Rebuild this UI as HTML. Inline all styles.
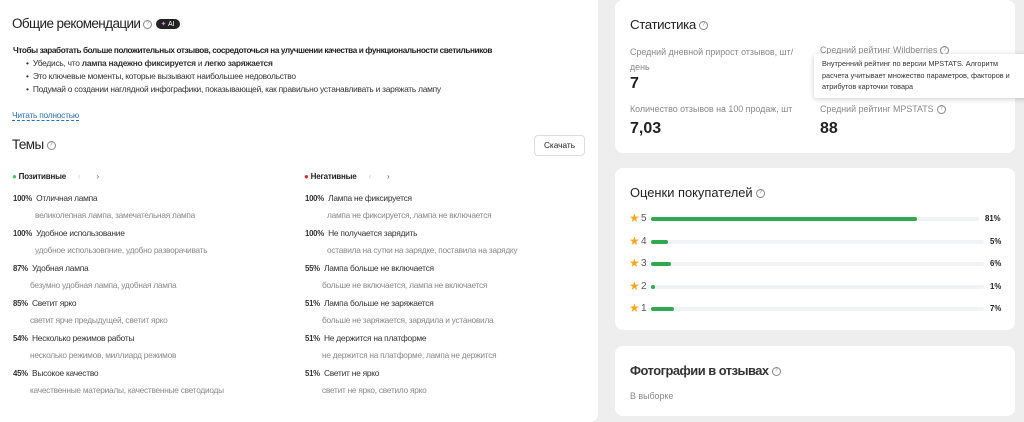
<!DOCTYPE html>
<html><head><meta charset="utf-8"><style>
*{box-sizing:border-box;margin:0;padding:0}
body{width:1024px;height:400px;overflow:hidden;background:#eeeeee;font-family:"Liberation Sans",sans-serif;color:#222;position:relative}
.card{position:absolute;background:#fff;border-radius:8px}
.a{position:absolute;white-space:nowrap}
.q{display:inline-block;width:9px;height:9px;border:1px solid #888;border-radius:50%;font-size:6px;line-height:7px;text-align:center;color:#888;vertical-align:middle;margin-left:3px;font-weight:normal;letter-spacing:0}
.s{font-size:8.4px;letter-spacing:-0.25px;color:#333}
.g{font-size:8.3px;letter-spacing:-0.25px;color:#888}
.pct{font-weight:bold;font-size:7.8px}
.track{position:absolute;height:4px;border-radius:2px;background:#f1f2f4}
.bar{position:absolute;height:4px;border-radius:2px;background:#2fa84f}
.star{position:absolute;color:#f5a623;font-size:12px}
</style></head><body>
<div class="card" style="left:-8px;top:-8px;width:606px;height:430px"></div>
<div class="card" style="left:615px;top:0;width:400px;height:153px"></div>
<div class="card" style="left:615px;top:168px;width:400px;height:162px"></div>
<div class="card" style="left:615px;top:346px;width:400px;height:70px"></div>

<div class="a" style="left:12px;top:16px;font-size:13.5px;letter-spacing:-0.6px">Общие рекомендации<span class="q">?</span> <span style="display:inline-block;background:#222;color:#fff;border-radius:7px;font-size:7px;padding:1px 5px;vertical-align:middle;letter-spacing:0"><span style="color:#c58cf5">✦</span> AI</span></div>
<div class="a" style="left:13px;top:46px;font-size:8.2px;letter-spacing:-0.4px;font-weight:bold">Чтобы заработать больше положительных отзывов, сосредоточься на улучшении качества и функциональности светильников</div>
<div class="a s" style="left:26px;top:58px">•&nbsp; Убедись, что <b>лампа надежно фиксируется</b> и <b>легко заряжается</b></div>
<div class="a s" style="left:26px;top:71px">•&nbsp; Это ключевые моменты, которые вызывают наибольшее недовольство</div>
<div class="a s" style="left:26px;top:84px">•&nbsp; Подумай о создании наглядной инфографики, показывающей, как правильно устанавливать и заряжать лампу</div>
<div class="a" style="left:12px;top:110px;font-size:8.4px;letter-spacing:-0.25px;color:#2a6fb8;border-bottom:1px dashed #2a6fb8">Читать полностью</div>
<div class="a" style="left:12px;top:137px;font-size:13.5px;letter-spacing:-0.6px">Темы<span class="q">?</span></div>
<div class="a" style="left:534px;top:135px;width:51px;height:21px;border:1px solid #ddd;border-radius:4px;font-size:8.3px;text-align:center;line-height:19px">Скачать</div>

<div class="a" style="left:12px;top:172px;font-size:8px;letter-spacing:-0.2px;font-weight:bold"><span style="color:#4cc26b">●</span> Позитивные <span style="color:#ccc;font-weight:normal;margin-left:10px">‹</span><span style="color:#555;font-weight:normal;margin-left:16px">›</span></div>
<div class="a" style="left:304px;top:172px;font-size:8px;letter-spacing:-0.2px;font-weight:bold"><span style="color:#d32f2f">●</span> Негативные <span style="color:#ccc;font-weight:normal;margin-left:10px">‹</span><span style="color:#555;font-weight:normal;margin-left:16px">›</span></div>

<div class="a s" style="left:13px;top:193px"><span class="pct">100%</span>&nbsp; Отличная лампа</div>
<div class="a g" style="left:35px;top:210px">великолепная лампа, замечательная лампа</div>
<div class="a s" style="left:13px;top:228px"><span class="pct">100%</span>&nbsp; Удобное использование</div>
<div class="a g" style="left:35px;top:245px">удобное использовпние, удобно разворачивать</div>
<div class="a s" style="left:13px;top:263px"><span class="pct">87%</span>&nbsp; Удобная лампа</div>
<div class="a g" style="left:30px;top:280px">безумно удобная лампа, удобная лампа</div>
<div class="a s" style="left:13px;top:298px"><span class="pct">85%</span>&nbsp; Светит ярко</div>
<div class="a g" style="left:30px;top:315px">светит ярче предыдущей, светит ярко</div>
<div class="a s" style="left:13px;top:333px"><span class="pct">54%</span>&nbsp; Несколько режимов работы</div>
<div class="a g" style="left:30px;top:350px">несколько режимов, миллиард режимов</div>
<div class="a s" style="left:13px;top:368px"><span class="pct">45%</span>&nbsp; Высокое качество</div>
<div class="a g" style="left:30px;top:385px">качественные материалы, качественные светодиоды</div>

<div class="a s" style="left:305px;top:193px"><span class="pct">100%</span>&nbsp; Лампа не фиксируется</div>
<div class="a g" style="left:327px;top:210px">лампа не фиксируется, лампа не включается</div>
<div class="a s" style="left:305px;top:228px"><span class="pct">100%</span>&nbsp; Не получается зарядить</div>
<div class="a g" style="left:327px;top:245px">оставила на сутки на зарядке, поставила на зарядку</div>
<div class="a s" style="left:305px;top:263px"><span class="pct">55%</span>&nbsp; Лампа больше не включается</div>
<div class="a g" style="left:322px;top:280px">больше не включается, лампа не включается</div>
<div class="a s" style="left:305px;top:298px"><span class="pct">51%</span>&nbsp; Лампа больше не заряжается</div>
<div class="a g" style="left:322px;top:315px">больше не заряжается, зарядила и установила</div>
<div class="a s" style="left:305px;top:333px"><span class="pct">51%</span>&nbsp; Не держится на платформе</div>
<div class="a g" style="left:322px;top:350px">не держится на платформе, лампа не держится</div>
<div class="a s" style="left:305px;top:368px"><span class="pct">51%</span>&nbsp; Светит не ярко</div>
<div class="a g" style="left:322px;top:385px">светит не ярко, светило ярко</div>

<div class="a" style="left:630px;top:17px;font-size:13.3px;letter-spacing:-0.4px">Статистика<span class="q">?</span></div>
<div class="a g" style="left:630px;top:45px;font-size:8.9px;letter-spacing:0;line-height:15px">Средний дневной прирост отзывов, шт/<br>день</div>
<div class="a" style="left:630px;top:75px;font-size:16px;font-weight:bold">7</div>
<div class="a g" style="left:630px;top:104px;font-size:8.9px;letter-spacing:0">Количество отзывов на 100 продаж, шт</div>
<div class="a" style="left:630px;top:120px;font-size:16px;font-weight:bold">7,03</div>
<div class="a g" style="left:820px;top:45px;font-size:8.9px;letter-spacing:0">Средний рейтинг Wildberries<span class="q">?</span></div>
<div class="a g" style="left:820px;top:104px;font-size:8.9px;letter-spacing:0">Средний рейтинг MPSTATS<span class="q">?</span></div>
<div class="a" style="left:820px;top:120px;font-size:16px;font-weight:bold">88</div>
<div class="a" style="left:814px;top:54px;width:215px;height:44px;background:#fff;box-shadow:0 1px 6px rgba(0,0,0,.2);border-radius:3px;padding:4px 8px;font-size:7.3px;line-height:11.5px;white-space:normal;color:#333">Внутренний рейтинг по версии MPSTATS. Алгоритм расчета учитывает множество параметров, факторов и атрибутов карточки товара</div>

<div class="a" style="left:630px;top:185px;font-size:12.9px">Оценки покупателей<span class="q">?</span></div>
<div class="star" style="left:629px;top:211px">★</div><div class="a" style="left:641px;top:213px;font-size:10px;color:#555">5</div><div class="track" style="left:651px;top:217px;width:328px"></div><div class="bar" style="left:651px;top:217px;width:266px"></div><div class="a pct" style="left:985px;top:214px">81%</div>
<div class="star" style="left:629px;top:234px">★</div><div class="a" style="left:641px;top:236px;font-size:10px;color:#555">4</div><div class="track" style="left:651px;top:240px;width:333px"></div><div class="bar" style="left:651px;top:240px;width:17px"></div><div class="a pct" style="left:990px;top:237px">5%</div>
<div class="star" style="left:629px;top:256px">★</div><div class="a" style="left:641px;top:258px;font-size:10px;color:#555">3</div><div class="track" style="left:651px;top:262px;width:333px"></div><div class="bar" style="left:651px;top:262px;width:20px"></div><div class="a pct" style="left:990px;top:259px">6%</div>
<div class="star" style="left:629px;top:279px">★</div><div class="a" style="left:641px;top:281px;font-size:10px;color:#555">2</div><div class="track" style="left:651px;top:285px;width:333px"></div><div class="bar" style="left:651px;top:285px;width:4px"></div><div class="a pct" style="left:990px;top:282px">1%</div>
<div class="star" style="left:629px;top:301px">★</div><div class="a" style="left:641px;top:303px;font-size:10px;color:#555">1</div><div class="track" style="left:651px;top:307px;width:333px"></div><div class="bar" style="left:651px;top:307px;width:23px"></div><div class="a pct" style="left:990px;top:304px">7%</div>

<div class="a" style="left:630px;top:363px;font-size:12.9px;letter-spacing:-0.5px;font-weight:bold;color:#333">Фотографии в отзывах<span class="q">?</span></div>
<div class="a g" style="left:630px;top:391px;font-size:8.9px;letter-spacing:0">В выборке</div>
</body></html>
